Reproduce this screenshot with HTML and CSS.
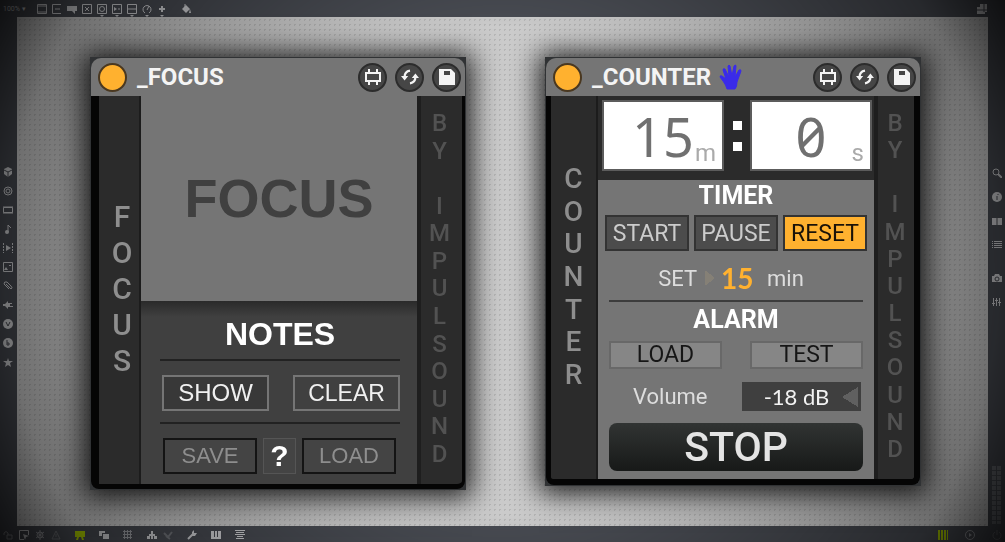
FILE: index.html
```
<!DOCTYPE html>
<html lang="en">

<head>
  <meta charset="UTF-8" />
  <meta name="viewport" content="width=device-width, initial-scale=1.0" />
  <title>Focus and Counter</title>
  <link rel="stylesheet" href="styles.css">
</head>

<body>
  <!-- shared icons -->
  <svg class="sprite" aria-hidden="true">
    <symbol id="i-frame" viewBox="0 0 18 18">
      <path d="M2 5h14v8H2zM5 1v4M13 1v4M5 13v4M13 13v4" fill="none" stroke="currentColor" stroke-width="2" />
    </symbol>
    <symbol id="i-swap" viewBox="0 0 20 18">
      <path d="M10 2Q4 3 4 9M10 16q6-1 6-7" fill="none" stroke="currentColor" stroke-width="2.500" />
      <path d="M0 8h8l-4 5zM12 10h8l-4-5z" fill="currentColor" />
    </symbol>
    <symbol id="i-disk" viewBox="0 0 16 16">
      <path d="M0 0h12l4 4v12H0zM5 2v4h6V2z" fill="currentColor" fill-rule="evenodd" />
    </symbol>
  </svg>

  <header class="bar top-bar">
    <button class="zoom">100% ▾</button>
    <button class="tool" aria-label="Object"><svg viewBox="0 0 10 10"><path d="M.5.5h9v9h-9zM1 2h8M1 8h8" /></svg></button>
    <button class="tool" aria-label="Message"><svg viewBox="0 0 10 10"><path d="M9 .5H.5v9H9M3 5h5" /></svg></button>
    <button class="tool" aria-label="Comment"><svg viewBox="0 0 10 10"><path class="solid" d="M0 2h10v5H8v3L5 7H0z" /></svg></button>
    <button class="tool" aria-label="Toggle"><svg viewBox="0 0 10 10"><path d="M.5.5h9v9h-9zM3 3l4 4M7 3L3 7" /></svg></button>
    <button class="tool more" aria-label="Button"><svg viewBox="0 0 10 10"><path d="M.5.5h9v9h-9z" /><circle cx="5" cy="5" r="2.500" /></svg></button>
    <button class="tool more" aria-label="Number"><svg viewBox="0 0 10 10"><path d="M.5.5h9v9h-9zM6 5h2" /><path class="solid" d="M2 3l3 2-3 2z" /></svg></button>
    <button class="tool more" aria-label="Slider"><svg viewBox="0 0 10 10"><path d="M.5.5h9v9h-9zM1 5h8" /></svg></button>
    <button class="tool more" aria-label="Dial"><svg viewBox="0 0 10 10"><path d="M3 9a4 4 0 1 1 4 0M5 6l2-4" /></svg></button>
    <button class="tool more" aria-label="Add"><svg viewBox="0 0 10 10"><path class="thick" d="M5 2v6M2 5h6" /></svg></button>
    <button class="tool paint" aria-label="Format"><svg viewBox="0 0 10 10"><path class="solid" d="M5 1l4 4-4 4-4-4zM9 5l1 4H8z" /><path d="M4 0v4" /></svg></button>
    <button class="tool end" aria-label="Windows"><svg viewBox="0 0 10 10"><path class="solid" d="M3 0h7v8H8v2H0V3h3z" /><path class="cut" d="M0 6h10M7 0v8" /></svg></button>
  </header>

  <nav class="bar side-bar left-bar" aria-label="Browser">
    <button class="tool" aria-label="Packages"><svg viewBox="0 0 10 10"><path class="solid" d="M5 0l4 2v5L5 10 1 7V2z" /><path class="cut" d="M1 3l4 2 4-2M5 5v5" /></svg></button>
    <button class="tool" aria-label="Devices"><svg viewBox="0 0 10 10"><circle cx="5" cy="5" r="4" /><circle cx="5" cy="5" r="2" /></svg></button>
    <button class="tool" aria-label="Objects"><svg viewBox="0 0 10 10"><path d="M.5 2.500h9v5h-9zM0 2h10M0 8h10" /></svg></button>
    <button class="tool" aria-label="Audio"><svg viewBox="0 0 10 10"><path d="M5 8V1l3 3" /><circle class="solid" cx="4" cy="8" r="2" /></svg></button>
    <button class="tool" aria-label="Video"><svg viewBox="0 0 10 10"><path class="dash" d="M.5 0v10M9.500 0v10" /><path class="solid" d="M3 2l5 3-5 3z" /></svg></button>
    <button class="tool" aria-label="Images"><svg viewBox="0 0 10 10"><path d="M.5.5h9v9h-9z" /><path class="solid" d="M1 8l2-3 2 3zM6 3h2v1H6z" /></svg></button>
    <button class="tool" aria-label="Files"><svg viewBox="0 0 10 10"><path d="M3 3l5 5q2-1 0-3L4 1Q1 0 1 3l5 5" /></svg></button>
    <button class="tool" aria-label="Plug-ins"><svg viewBox="0 0 10 10"><path class="solid" d="M0 4h2l3-3v2h4v1H7v2h3v1H5v2L2 6H0z" /></svg></button>
    <button class="tool" aria-label="Vizzie"><svg viewBox="0 0 10 10"><circle class="solid" cx="5" cy="5" r="5" /><path class="cut" d="M3 3l2 4 2-4" /></svg></button>
    <button class="tool" aria-label="Beap"><svg viewBox="0 0 10 10"><circle class="solid" cx="5" cy="5" r="5" /><path class="cut" d="M4 2v5h2V5H4" /></svg></button>
    <button class="tool" aria-label="Favorites"><svg viewBox="0 0 10 10"><path class="solid" d="M5 1l1 3h4L7 6l1 4-3-2-3 2 1-4-3-2h4z" /></svg></button>
  </nav>

  <main class="canvas">
    <section class="device focus">
      <header class="title-bar">
        <button class="power" aria-label="Focus on"></button>
        <h2>_FOCUS</h2>
        <button class="round" aria-label="Edit"><svg><use href="#i-frame" /></svg></button>
        <button class="round" aria-label="Swap"><svg><use href="#i-swap" /></svg></button>
        <button class="round" aria-label="Save preset"><svg><use href="#i-disk" /></svg></button>
      </header>
      <div class="device-body">
        <div class="name"><span>F</span><span>O</span><span>C</span><span>U</span><span>S</span></div>
        <div class="center">
          <div class="focus-screen">FOCUS</div>
          <div class="notes">
            <h3>NOTES</h3>
            <hr>
            <div class="row">
              <button class="show">SHOW</button>
              <button class="clear">CLEAR</button>
            </div>
            <hr>
            <div class="row files">
              <button>SAVE</button>
              <button class="help">?</button>
              <button>LOAD</button>
            </div>
          </div>
        </div>
        <div class="brand"><span>B</span><span>Y</span><span></span><span>I</span><span>M</span><span>P</span><span>U</span><span>L</span><span>S</span><span>O</span><span>U</span><span>N</span><span>D</span></div>
      </div>
    </section>

    <section class="device counter">
      <header class="title-bar">
        <button class="power" aria-label="Counter on"></button>
        <h2>_COUNTER</h2>
        <svg class="hand" viewBox="0 0 24 26" aria-hidden="true">
          <path d="M8 25q-1-4-4-8L1 13q0-2 2-1l4 3L4 6q0-2 2-1l4 8L9 2q1-2 2 0l2 10 2-10q2-2 2 0l-1 11 4-7q2-1 2 1l-4 11q0 5-2 7z" fill="#3a2bea" stroke="#3a2bea" />
        </svg>
        <button class="round" aria-label="Edit"><svg><use href="#i-frame" /></svg></button>
        <button class="round" aria-label="Swap"><svg><use href="#i-swap" /></svg></button>
        <button class="round" aria-label="Save preset"><svg><use href="#i-disk" /></svg></button>
      </header>
      <div class="device-body">
        <div class="name"><span>C</span><span>O</span><span>U</span><span>N</span><span>T</span><span>E</span><span>R</span></div>
        <div class="center">
          <div class="clock">
            <div class="digits">15<small>m</small></div>
            <div class="colon"><i></i><i></i></div>
            <div class="digits">0<small>s</small></div>
          </div>
          <div class="settings">
            <h3>TIMER</h3>
            <div class="row timer">
              <button>START</button>
              <button>PAUSE</button>
              <button class="reset">RESET</button>
            </div>
            <div class="set">
              <label for="minutes">SET</label>
              <input id="minutes" type="text" value="15">
              <span>min</span>
            </div>
            <hr>
            <h3>ALARM</h3>
            <div class="row alarm">
              <button>LOAD</button>
              <button>TEST</button>
            </div>
            <div class="row volume">
              <label for="volume">Volume</label>
              <input id="volume" type="text" value="-18 dB">
            </div>
            <button class="stop">STOP</button>
          </div>
        </div>
        <div class="brand"><span>B</span><span>Y</span><span></span><span>I</span><span>M</span><span>P</span><span>U</span><span>L</span><span>S</span><span>O</span><span>U</span><span>N</span><span>D</span></div>
      </div>
    </section>
  </main>

  <aside class="bar side-bar right-bar">
    <button class="tool" aria-label="Search"><svg viewBox="0 0 10 10"><circle cx="4" cy="4" r="3" /><path class="thick" d="M6 6l4 4" /></svg></button>
    <button class="tool" aria-label="Inspector"><svg viewBox="0 0 10 10"><circle class="solid" cx="5" cy="5" r="5" /><path class="cut" d="M6 2v1M5 4v4" /></svg></button>
    <button class="tool" aria-label="Reference"><svg viewBox="0 0 10 10"><path class="solid" d="M0 2h4.500v7H0zM5.500 2H10v7H5.500z" /></svg></button>
    <button class="tool" aria-label="Console"><svg viewBox="0 0 10 10"><path d="M0 1.500h1M2 1.500h8M0 3.500h1M2 3.500h8M0 5.500h1M2 5.500h8M0 7.500h1M2 7.500h8" /></svg></button>
    <button class="tool spaced" aria-label="Snapshots"><svg viewBox="0 0 10 10"><path class="solid" d="M0 3h2l1-2h4l1 2h2v6H0z" /><circle class="cut" cx="5" cy="6" r="2" /></svg></button>
    <button class="tool" aria-label="Mixer"><svg viewBox="0 0 10 10"><path d="M1.500 1v8M4.500 1v8M7.500 1v8M0 6.500h3M3 3.500h3M6 5.500h3" /></svg></button>
    <div class="meter"><i></i><i></i></div>
  </aside>

  <footer class="bar bottom-bar">
    <button class="tool dim" aria-label="Lock"><svg viewBox="0 0 10 10"><path d="M1 5V3q2-3 4 0v2M4 5h5v4H4z" /></svg></button>
    <button class="tool" aria-label="New view"><svg viewBox="0 0 10 10"><path d="M5 9.500H.5v-9h9V5" /><path class="solid" d="M4 4l6 2-3 1-1 3z" /></svg></button>
    <button class="tool dim" aria-label="Freeze"><svg viewBox="0 0 10 10"><path d="M5 0v10M1 2l8 6M9 2L1 8" /><circle cx="5" cy="5" r="3" /></svg></button>
    <button class="tool faint" aria-label="Warnings"><svg viewBox="0 0 10 10"><path d="M5 1l4 8H1zM5 4v3" /></svg></button>
    <button class="tool green gap" aria-label="Presentation"><svg viewBox="0 0 10 10"><path class="solid" d="M0 1h10v6H8l1 3H7L6 7H4l-1 3H1l1-3H0z" /></svg></button>
    <button class="tool gap" aria-label="Layers"><svg viewBox="0 0 10 10"><path class="solid" d="M0 1h6v2H3v3H0zM4 4h6v5H4z" /></svg></button>
    <button class="tool dim gap" aria-label="Grid"><svg viewBox="0 0 10 10"><path d="M1.500 0v9M4.500 0v9M7.500 0v9M0 1.500h9M0 4.500h9M0 7.500h9" /></svg></button>
    <button class="tool gap" aria-label="Structure"><svg viewBox="0 0 10 10"><path class="solid" d="M4 1h2v3h2v2h2v3H7V6H6v3H4V6H3v3H0V6h2V4h2z" /></svg></button>
    <button class="tool faint" aria-label="Probe"><svg viewBox="0 0 10 10"><path class="thick" d="M1 3l4 4 4-5M3 6l4 3" /></svg></button>
    <button class="tool gap" aria-label="Tools"><svg viewBox="0 0 10 10"><path class="thick" d="M1 9l5-5" /><path class="solid" d="M5 2l2-2v3h3L8 6H5z" /></svg></button>
    <button class="tool gap" aria-label="Keyboard"><svg viewBox="0 0 10 10"><path class="solid" d="M0 1h10v8H0z" /><path class="cut" d="M3.500 1v6M6.500 1v6" /></svg></button>
    <button class="tool gap" aria-label="Key map"><svg viewBox="0 0 10 10"><path d="M0 .5h10M1 2.500h8M0 4.500h10M2 6.500h6M1 8.500h8" /></svg></button>
    <button class="tool green end" aria-label="Audio meter"><svg viewBox="0 0 10 10"><path class="thick" d="M1 0v10M4 0v10M7 0v10" /><path d="M9.500 0v10" /></svg></button>
    <button class="tool dim wide" aria-label="Play"><svg viewBox="0 0 10 10"><circle cx="5" cy="5" r="4.500" /><path class="solid" d="M4 3l3 2-3 2z" /></svg></button>
    <button class="tool faint wide" aria-label="Audio power"><svg viewBox="0 0 10 10"><path d="M3 2a4 4 0 1 0 4 0M5 0v5" /></svg></button>
  </footer>
</body>

</html>
```
FILE: styles.css
```
* {
  box-sizing: border-box;
}

body {
  margin: 0;
  min-height: 100vh;
  display: grid;
  grid-template: 17px 1fr 16px / 17px 1fr 17px;
  background: #484b52;
  font-family: Roboto, "Liberation Sans", sans-serif;
}

/* dark corners over the whole window */
body::after {
  content: "";
  position: fixed;
  inset: 0;
  pointer-events: none;
  background: radial-gradient(ellipse 55% 100%, transparent 45%, rgba(0, 0, 0, 0.45) 90%, rgba(0, 0, 0, 0.8) 104%);
}

button,
input {
  padding: 0;
  border: none;
  background: none;
  color: inherit;
  font: inherit;
  border-radius: 0;
}

button {
  cursor: pointer;
}

h2,
h3,
hr {
  margin: 0;
}

hr {
  border: none;
  height: 2px;
  background: #222;
}

.sprite {
  position: absolute;
  width: 0;
  height: 0;
}

/* tool bars */
.bar {
  display: flex;
  align-items: center;
  color: #d0d1d4;
}

.top-bar,
.bottom-bar {
  grid-column: 1 / -1;
}

.top-bar {
  gap: 5px;
  padding: 0 18px 0 3px;
}

.bottom-bar {
  gap: 6px;
  padding: 2px 3px 0;
}

.zoom {
  width: 29px;
  font-size: 7px;
  text-align: left;
  white-space: nowrap;
}

.tool {
  position: relative;
  display: block;
  flex: none;
  width: 10px;
  height: 10px;
}

.tool svg {
  display: block;
  width: 10px;
  height: 10px;
  fill: none;
  stroke: currentColor;
}

.tool .solid {
  fill: currentColor;
  stroke: none;
}

.tool .thick {
  stroke-width: 2;
}

.tool .cut {
  stroke: #484b52;
}

.tool .dash {
  stroke-dasharray: 2 1;
}

.more::after {
  content: "";
  position: absolute;
  left: 3px;
  top: 11px;
  border: 2px solid transparent;
  border-top-color: currentColor;
  border-bottom: none;
}

.paint {
  margin-left: 9px;
}

.end {
  margin-left: auto;
}

.gap {
  margin-left: 8px;
}

.wide {
  margin-left: 11px;
}

.dim {
  opacity: 0.6;
}

.faint {
  opacity: 0.3;
}

.green {
  color: #a9c800;
}

.side-bar {
  flex-direction: column;
}

.left-bar {
  justify-content: center;
  gap: 9px;
  padding: 0 2px 9px 0;
}

.right-bar {
  gap: 14px;
  padding: 151px 0 2px;
}

.spaced {
  margin-top: 9px;
}

.meter {
  display: flex;
  gap: 1px;
  height: 58px;
  margin-top: auto;
}

.meter i {
  width: 4px;
  background: repeating-linear-gradient(#6c6f75 0 4px, #4c4f56 4px 5px);
}

/* devices */
.canvas {
  display: flex;
  justify-content: space-between;
  align-items: flex-start;
  padding: 40px 67px 0 73px;
  background: radial-gradient(circle, rgba(0, 0, 0, 0.1) 1px, transparent 1px) 0 0 / 5px 5px #cbcbcb;
}

/* above the dark corners */
.device {
  position: relative;
  z-index: 1;
  flex: 0 1 376px;
  border: 1px solid #303234;
  background: #303234;
  box-shadow: 0 2px 26px 6px rgba(0, 0, 0, 0.85);
}

.title-bar {
  display: flex;
  align-items: center;
  gap: 8px;
  height: 38px;
  padding: 0 4px 0 7px;
  background: #757575;
  border-radius: 10px 10px 0 0;
  color: #f4f4f4;
}

.title-bar h2 {
  margin-left: 2px;
  font-size: 24px;
  line-height: 28px;
}

.power {
  width: 29px;
  height: 29px;
  border: 2px solid #4a3820;
  border-radius: 50%;
  background: #ffb12f;
}

.round {
  display: grid;
  place-items: center;
  width: 29px;
  height: 29px;
  border: 2px solid #2c2c2c;
  border-radius: 50%;
  background: #464646;
}

h2 + .round,
.hand + .round {
  margin-left: auto;
}

.round svg {
  width: 18px;
  height: 18px;
}

.round:last-child svg {
  width: 16px;
  height: 16px;
}

.hand {
  width: 24px;
  height: 26px;
}

.device-body {
  display: grid;
  grid-template-columns: 42px 1fr 45px;
  border: solid #050505;
  border-width: 0 3px 5px 8px;
  border-radius: 0 0 8px 8px;
  background: #2b2b2b;
}

.name,
.brand {
  display: flex;
  flex-direction: column;
  justify-content: space-between;
  text-align: center;
  font-weight: 500;
}

.name {
  font-size: 30px;
  line-height: 36px;
  color: #8e8e8e;
  padding: 103px 0 105px 6px;
  border-right: 2px solid #1c1c1c;
}

.brand {
  padding: 14px 4px 16px 0;
  border-left: 4px solid #1e1e1e;
  font-size: 24px;
  line-height: 27px;
  color: #525252;
}

.brand span {
  height: 27px;
}

.row {
  display: flex;
  justify-content: space-between;
}

h3 {
  text-align: center;
  color: #fff;
}

/* focus */
.focus-screen,
.notes {
  font-family: "Liberation Sans", Arial, sans-serif;
}

.focus-screen {
  height: 205px;
  background: #757575;
  color: #404040;
  font-size: 54px;
  font-weight: bold;
  line-height: 204px;
  text-align: center;
}

.notes {
  padding: 14px 17px 10px 19px;
  background: linear-gradient(#2a2a2a, #404040 16px);
}

.notes h3 {
  font-size: 32px;
  line-height: 38px;
  margin-bottom: 6px;
}

.notes .row {
  padding: 14px 0 11px 2px;
}

.notes .row button {
  width: 107px;
  height: 36px;
  border: 2px solid #757575;
  background: #383838;
  color: #f0f0f0;
  font-size: 24px;
}

.notes .row .clear {
  background: #404040;
  font-size: 23px;
}

.notes .files {
  padding: 14px 4px 0 3px;
}

.notes .files button {
  width: 94px;
  border-color: #141414;
  background: #444;
  color: #8e8e8e;
  font-size: 22px;
}

.notes .files .help {
  width: 33px;
  border: 1px solid #555;
  color: #fff;
  font-size: 30px;
  font-weight: bold;
}

/* counter */
.counter .device-body {
  grid-template-columns: 47px 1fr 40px;
  border-width: 0 6px 6px 5px;
}

.counter .name {
  padding: 67px 0 88px;
  font-size: 28px;
  line-height: 32px;
}

.counter .brand {
  padding-right: 2px;
}

.clock {
  display: flex;
  justify-content: space-between;
  align-items: flex-start;
  height: 84px;
  padding: 4px 2px 0 4px;
}

.digits {
  position: relative;
  width: 122px;
  height: 71px;
  border: 2px solid #5c5c5c;
  background: #fff;
  color: #707070;
  font-family: "Noto Sans", sans-serif;
  font-feature-settings: "zero";
  font-size: 54px;
  line-height: 68px;
  text-align: center;
}

.digits small {
  position: absolute;
  right: 6px;
  bottom: 2px;
  color: #aaa;
  font-family: Roboto, sans-serif;
  font-size: 24px;
  line-height: 28px;
}

.colon {
  display: grid;
  gap: 12px;
  padding-top: 21px;
}

.colon i {
  width: 9px;
  height: 9px;
  background: #fff;
}

.settings {
  padding: 1px 7px 8px;
  background: #757575;
}

.settings h3 {
  font-size: 25px;
  line-height: 30px;
}

.settings hr {
  margin: 0 4px 3px;
  background: #3c3c3c;
}

.settings button {
  font-size: 23px;
}

.timer {
  margin-top: 4px;
}

.timer button {
  width: 84px;
  height: 36px;
  border: 2px solid #333;
  background: #4c4c4c;
  color: #ccc;
}

.timer .reset {
  background: #ffb12f;
  color: #1a1208;
}

.set {
  display: flex;
  justify-content: center;
  align-items: center;
  height: 49px;
  padding: 5px 10px 0 0;
  color: #ddd;
  font-size: 22px;
}

.set input {
  width: 54px;
  margin: 0 8px;
  padding-left: 16px;
  background: conic-gradient(from 232deg at 10px 50%, #858076 76deg, transparent 0) 0 center / 10px 16px no-repeat;
  color: #ffb12f;
  font-family: Lato, sans-serif;
  font-size: 28px;
  font-weight: bold;
}

.alarm {
  padding: 6px 4px 0;
}

.alarm button {
  width: 113px;
  height: 28px;
  border: 2px solid #686868;
  background: #868686;
  color: #161616;
  line-height: 24px;
}

.volume {
  align-items: center;
  padding: 13px 6px 12px 28px;
  color: #ddd;
  font-size: 22px;
}

.volume input {
  width: 119px;
  height: 29px;
  padding-right: 10px;
  background: conic-gradient(from 58deg at 0 50%, #606060 64deg, transparent 0) right 3px center / 16px 20px no-repeat #3f3f3f;
  color: #f2f2f2;
  font-family: Lato, sans-serif;
  text-align: center;
}

.settings .stop {
  display: block;
  width: calc(100% - 8px);
  height: 48px;
  margin: 0 auto;
  border-radius: 8px;
  background: linear-gradient(#313433, #171918);
  color: #e4e4e4;
  font-size: 41px;
  font-weight: 500;
  line-height: 48px;
}
```
